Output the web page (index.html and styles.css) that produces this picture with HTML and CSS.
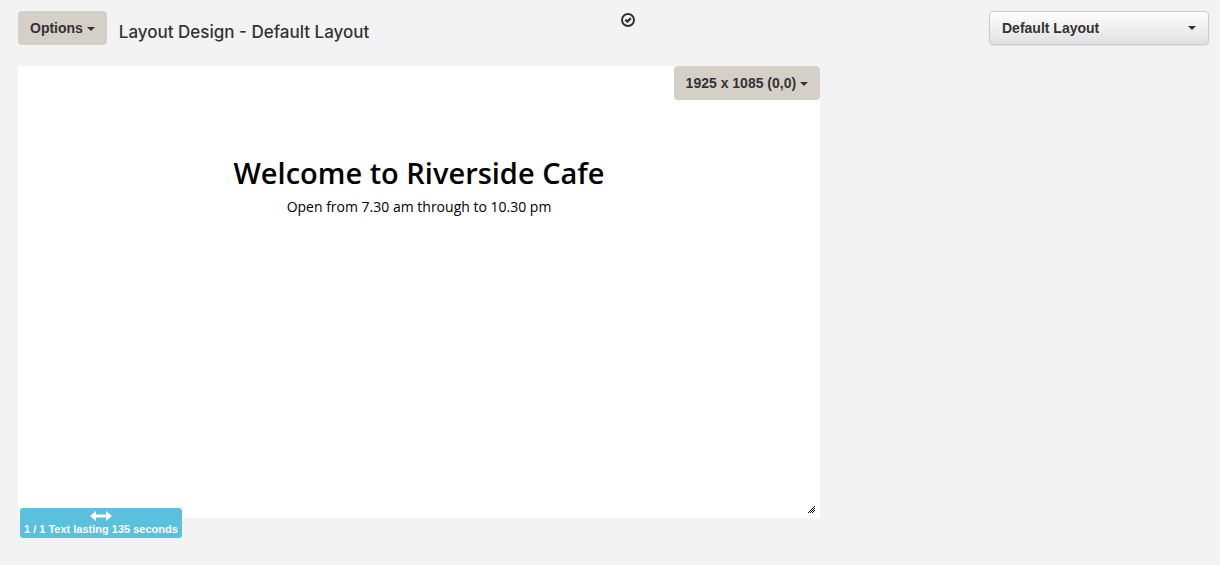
FILE: index.html
```html
<!DOCTYPE html>
<html lang="en">
<head>
<meta charset="utf-8">
<title>Layout Design - Default Layout</title>
<link rel="stylesheet" href="styles.css">
</head>
<body>
<header class="topbar">
  <div class="heading">
    <button class="btn" type="button">Options <span class="caret"></span></button>
    <h1 class="title">Layout Design - Default Layout</h1>
  </div>
  <svg class="status" viewBox="0 0 14 14" role="img" aria-label="Layout is valid">
    <circle cx="7" cy="7" r="6" fill="none" stroke="#333" stroke-width="2"/>
    <path d="M4.4 6.6l2 2 3.5-3.5" fill="none" stroke="#333" stroke-width="2.2"/>
  </svg>
  <div class="picker">
    <select class="picker-select" aria-label="Layout">
      <option>Default Layout</option>
    </select>
    <span class="caret picker-caret"></span>
  </div>
</header>
<main class="stage">
  <button class="btn region-size" type="button">1925 x 1085 (0,0) <span class="caret"></span></button>
  <div class="message">
    <h2 class="welcome">Welcome to Riverside Cafe</h2>
    <p class="hours">Open from 7.30 am through to 10.30 pm</p>
  </div>
  <svg class="grip" viewBox="0 0 8 8" shape-rendering="crispEdges" aria-hidden="true">
    <path d="M7 0h1v1h-1zM6 1h1v1h-1zM5 2h1v1h-1zM7 2h1v1h-1zM4 3h1v1h-1zM6 3h1v1h-1zM3 4h1v1h-1zM5 4h1v1h-1zM7 4h1v1h-1zM2 5h1v1h-1zM4 5h1v1h-1zM6 5h1v1h-1zM1 6h1v1h-1zM3 6h1v1h-1zM5 6h1v1h-1z" fill="#111"/>
  </svg>
  <div class="chip">
    <svg class="arrows" viewBox="0 0 22 10" aria-hidden="true">
      <path d="M0 5L6 0V3.500H16V0L22 5L16 10V6.500H6V10Z" fill="#fff"/>
    </svg>
    <span>1 / 1 Text lasting 135 seconds</span>
  </div>
</main>
</body>
</html>
```

FILE: styles.css
```css
* { box-sizing: border-box; }
body {
  margin: 0;
  padding: 11px 11px 27px 18px;
  background: #f3f3f3;
  color: #333;
  font: 14px/20px "Liberation Sans", Arial, sans-serif;
}
.topbar {
  display: grid;
  grid-template-columns: 1fr auto 1fr;
  align-items: start;
  margin-bottom: 21px;
}
.heading { display: flex; gap: 12px; }
.title {
  margin: 11px 0 0;
  font: 500 17px/20px Inter, "Liberation Sans", Arial, sans-serif;
}
.btn {
  padding: 7px 12px;
  border: 0;
  border-radius: 4px;
  background: #d4d0c8;
  color: #333;
  font: bold 14px/20px "Liberation Sans", Arial, sans-serif;
  white-space: nowrap;
}
.caret {
  display: inline-block;
  vertical-align: middle;
  border: 4px solid transparent;
  border-top-color: #333;
  border-bottom: 0;
}
.status { width: 14px; height: 14px; margin: 2px 0 0 28px; }
.picker { position: relative; justify-self: end; width: 220px; }
.picker-select {
  appearance: none;
  display: block;
  width: 100%;
  height: 34px;
  padding: 0 30px 0 12px;
  border: 1px solid #ccc;
  border-radius: 4px;
  background: linear-gradient(#fff, #e0e0e0);
  box-shadow: 0 1px 2px rgba(0, 0, 0, .08);
  color: #333;
  font: bold 14px/20px "Liberation Sans", Arial, sans-serif;
}
.picker-caret { position: absolute; top: 15px; right: 13px; pointer-events: none; }
.stage {
  position: relative;
  width: 67.34%;
  aspect-ratio: 802 / 452;
  background: #fff;
}
.region-size { position: absolute; top: 0; right: 0; }
.message {
  padding-top: 87px;
  color: #000;
  font-family: "Open Sans", "Noto Sans", sans-serif;
  text-align: center;
}
.welcome { margin: 0; font-size: 29px; line-height: 40px; font-weight: 600; }
.hours { margin: 4px 0 0; font-size: 14px; line-height: 20px; font-weight: 500; }
.grip { position: absolute; right: 5px; bottom: 4px; width: 8px; height: 8px; }
.chip {
  position: absolute;
  left: 2px;
  bottom: -20px;
  display: flex;
  flex-direction: column;
  align-items: center;
  padding: 3px 4px 1px;
  border-radius: 3px;
  background: #5bc0de;
  color: #fff;
  font: bold 11px/16px "Liberation Sans", Arial, sans-serif;
  white-space: nowrap;
}
.arrows { width: 22px; height: 10px; }
```
